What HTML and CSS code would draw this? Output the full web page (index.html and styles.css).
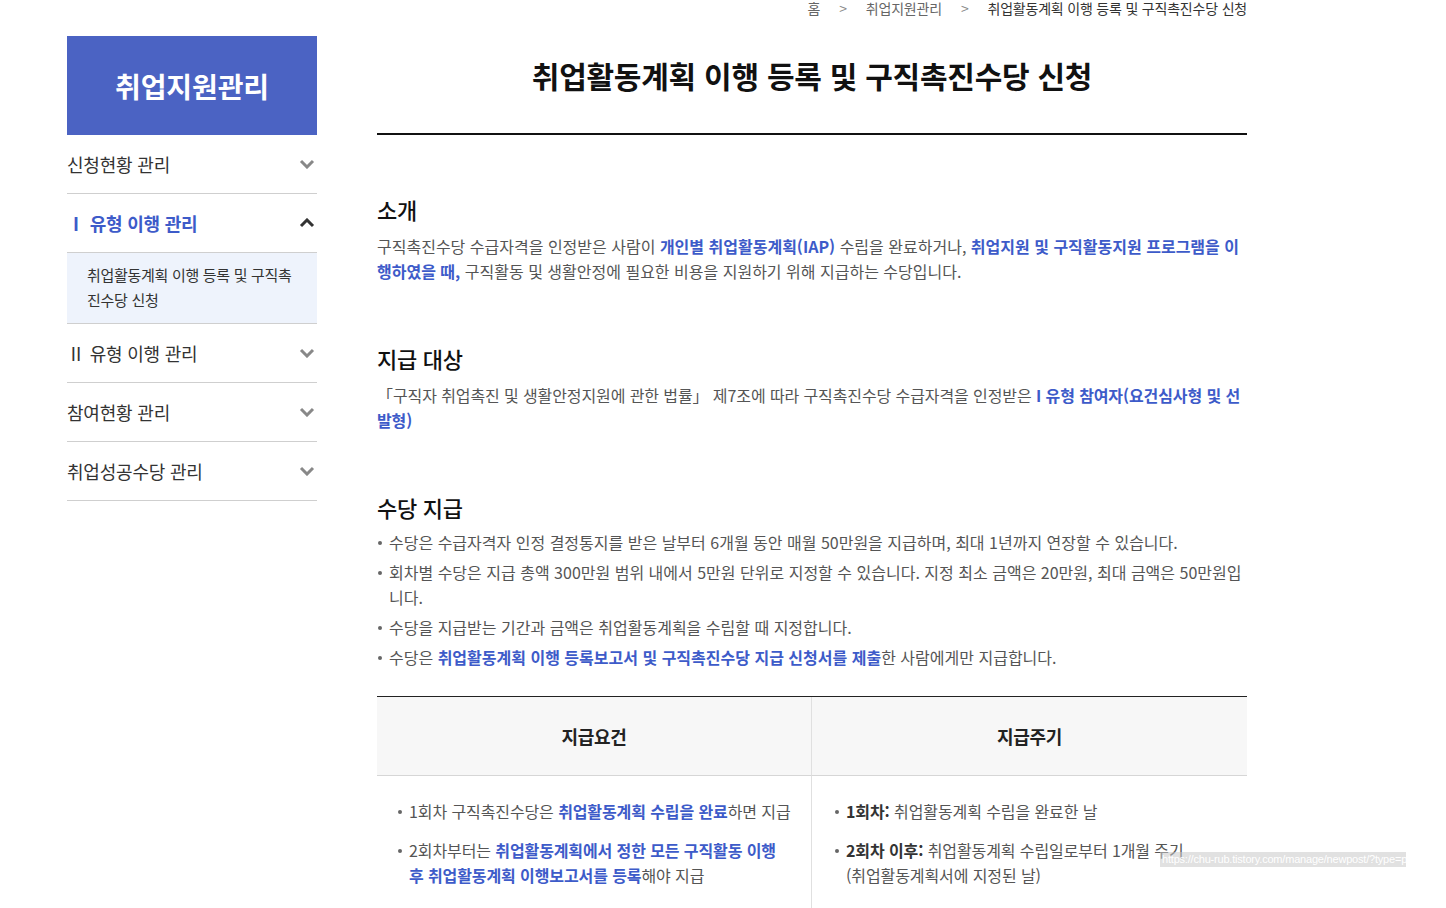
FILE: index.html
```html
<!DOCTYPE html>
<html lang="ko">
<head>
<meta charset="utf-8">
<title>취업활동계획 이행 등록 및 구직촉진수당 신청</title>
<link rel="stylesheet" href="styles.css">
</head>
<body>
<div class="page">
  <aside class="side">
    <div class="side-head">취업지원관리</div>
    <ul class="menu">
      <li class="menu-item">
        <span>신청현황 관리</span>
        <svg class="chev" viewBox="0 0 16 10" width="16" height="10"><path d="M2 2 L8 8 L14 2" fill="none" stroke="#888" stroke-width="3"/></svg>
      </li>
      <li class="menu-item active">
        <span>Ⅰ 유형 이행 관리</span>
        <svg class="chev" viewBox="0 0 16 10" width="16" height="10"><path d="M2 8 L8 2 L14 8" fill="none" stroke="#333" stroke-width="3"/></svg>
      </li>
      <li class="submenu">취업활동계획 이행 등록 및 구직촉진수당 신청</li>
      <li class="menu-item">
        <span>Ⅱ 유형 이행 관리</span>
        <svg class="chev" viewBox="0 0 16 10" width="16" height="10"><path d="M2 2 L8 8 L14 2" fill="none" stroke="#888" stroke-width="3"/></svg>
      </li>
      <li class="menu-item">
        <span>참여현황 관리</span>
        <svg class="chev" viewBox="0 0 16 10" width="16" height="10"><path d="M2 2 L8 8 L14 2" fill="none" stroke="#888" stroke-width="3"/></svg>
      </li>
      <li class="menu-item">
        <span>취업성공수당 관리</span>
        <svg class="chev" viewBox="0 0 16 10" width="16" height="10"><path d="M2 2 L8 8 L14 2" fill="none" stroke="#888" stroke-width="3"/></svg>
      </li>
    </ul>
  </aside>

  <main class="main">
    <nav class="crumbs">
      <span>홈</span><span class="sep">&gt;</span><span>취업지원관리</span><span class="sep">&gt;</span><span class="cur">취업활동계획 이행 등록 및 구직촉진수당 신청</span>
    </nav>
    <h1 class="title">취업활동계획 이행 등록 및 구직촉진수당 신청</h1>

    <section class="sec">
      <h2>소개</h2>
      <p>구직촉진수당 수급자격을 인정받은 사람이 <b>개인별 취업활동계획(IAP)</b> 수립을 완료하거나, <b>취업지원 및 구직활동지원 프로그램을 이행하였을 때,</b> 구직활동 및 생활안정에 필요한 비용을 지원하기 위해 지급하는 수당입니다.</p>
    </section>

    <section class="sec">
      <h2>지급 대상</h2>
      <p class="tight">「구직자 취업촉진 및 생활안정지원에 관한 법률」 제7조에 따라 구직촉진수당 수급자격을 인정받은 <b>I 유형 참여자(요건심사형 및 선발형)</b></p>
    </section>

    <section class="sec">
      <h2>수당 지급</h2>
      <ul class="dots">
        <li>수당은 수급자격자 인정 결정통지를 받은 날부터 6개월 동안 매월 50만원을 지급하며, 최대 1년까지 연장할 수 있습니다.</li>
        <li>회차별 수당은 지급 총액 300만원 범위 내에서 5만원 단위로 지정할 수 있습니다. 지정 최소 금액은 20만원, 최대 금액은 50만원입니다.</li>
        <li>수당을 지급받는 기간과 금액은 취업활동계획을 수립할 때 지정합니다.</li>
        <li>수당은 <b>취업활동계획 이행 등록보고서 및 구직촉진수당 지급 신청서를 제출</b>한 사람에게만 지급합니다.</li>
      </ul>

      <div class="table">
        <div class="th">지급요건</div>
        <div class="th">지급주기</div>
        <div class="td">
          <ul class="dots cell">
            <li>1회차 구직촉진수당은 <b>취업활동계획 수립을 완료</b>하면 지급</li>
            <li>2회차부터는 <b>취업활동계획에서 정한 모든 구직활동 이행 후 취업활동계획 이행보고서를 등록</b>해야 지급</li>
          </ul>
        </div>
        <div class="td">
          <ul class="dots cell">
            <li><strong>1회차:</strong> 취업활동계획 수립을 완료한 날</li>
            <li><strong>2회차 이후:</strong> 취업활동계획 수립일로부터 1개월 주기<br>(취업활동계획서에 지정된 날)</li>
          </ul>
        </div>
      </div>
    </section>
  </main>
</div>
<div class="status">https://chu-rub.tistory.com/manage/newpost/?type=p</div>
</body>
</html>
```

FILE: styles.css
```css
* { box-sizing: border-box; }
html, body { margin: 0; padding: 0; background: #fff; }
body {
  font-family: "Noto Sans CJK KR", "Noto Sans", sans-serif;
  color: #555;
  overflow: hidden;
  height: 908px;
}
ul { list-style: none; margin: 0; padding: 0; }
h1, h2, p { margin: 0; }

.page {
  display: flex;
  gap: 60px;
  margin-left: 67px;
  width: 1180px;
}

/* sidebar */
.side { width: 250px; flex: none; margin-top: 36px; }
.side-head {
  height: 99px;
  background: #4b63c3;
  color: #fff;
  font-size: 28px;
  font-weight: 700;
  letter-spacing: -0.1px;
  display: flex;
  align-items: center;
  justify-content: center;
}
.menu-item {
  height: 59px;
  border-bottom: 1px solid #cfcfcf;
  display: flex;
  align-items: center;
  justify-content: space-between;
  padding-right: 2px;
  font-size: 18px;
  letter-spacing: -0.2px;
  color: #333;
}
.menu-item.active { color: #3d5bc9; font-weight: 700; }
.submenu {
  background: #eef3fc;
  border-bottom: 1px solid #cfcfcf;
  padding: 9px 20px 11px 20px;
  font-size: 15px;
  line-height: 25px;
  color: #333;
  letter-spacing: -0.3px;
}

/* main */
.main { width: 870px; flex: none; }
.crumbs {
  height: 16px;
  display: flex;
  justify-content: flex-end;
  align-items: center;
  font-size: 14px;
  line-height: 16px;
  color: #666;
  letter-spacing: -0.2px;
}
.crumbs .sep { margin: 0 19px; color: #888; }
.crumbs .cur { color: #333; }
.title {
  margin-top: 39px;
  padding-bottom: 38px;
  border-bottom: 2px solid #111;
  text-align: center;
  font-size: 30px;
  line-height: 40px;
  font-weight: 700;
  color: #111;
  letter-spacing: -0.25px;
}
.sec { margin-top: 59px; }
.sec h2 {
  font-size: 22px;
  line-height: 30px;
  font-weight: 500;
  color: #111;
  letter-spacing: -0.3px;
}
.sec p {
  margin-top: 10px;
  font-size: 16px;
  line-height: 25px;
  letter-spacing: 0;
}
.sec p.tight { letter-spacing: -0.1px; }
b { color: #3d5bc9; font-weight: 700; }
strong { color: #333; font-weight: 700; }

.dots { margin-top: 8px; font-size: 16px; line-height: 25px; letter-spacing: 0; }
.dots li { position: relative; padding-left: 12px; margin-bottom: 5px; }
.dots li::before {
  content: "";
  position: absolute;
  left: 1px;
  top: 11px;
  width: 4px;
  height: 4px;
  border-radius: 50%;
  background: #666;
}

.table {
  margin-top: 26px;
  display: grid;
  grid-template-columns: 435px 435px;
  border-top: 1px solid #222;
}
.th {
  height: 79px;
  background: #f7f7f7;
  border-bottom: 1px solid #d6d6d6;
  display: flex;
  align-items: center;
  justify-content: center;
  font-size: 18px;
  font-weight: 700;
  color: #222;
  letter-spacing: -0.3px;
}
.th:first-child, .td:nth-child(3) { border-right: 1px solid #e0e0e0; }
.td { padding: 23px 20px 20px 20px; min-height: 140px; }
.td + .td { padding-left: 22px; }
.cell { margin-top: 0; letter-spacing: -0.1px; }
.cell li { margin-bottom: 14px; }

.status {
  position: absolute;
  left: 1160px;
  top: 852px;
  width: 246px;
  height: 15px;
  background: rgba(200, 200, 200, 0.55);
  color: #fff;
  font-family: "Liberation Sans", sans-serif;
  font-size: 11px;
  line-height: 15px;
  padding-left: 2px;
  white-space: nowrap;
  overflow: hidden;
  letter-spacing: -0.2px;
}
```
